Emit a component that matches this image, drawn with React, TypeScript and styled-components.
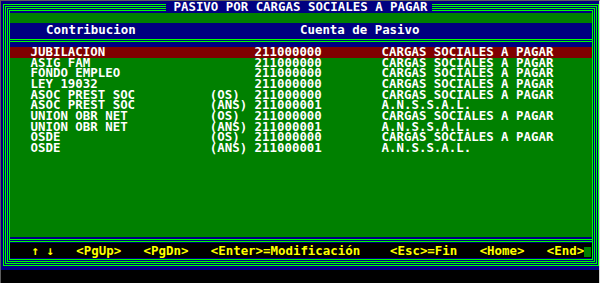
import React from "react";
import styled, { createGlobalStyle } from "styled-components";

const CHAR = 7.47;
const NAVY = "#000080";
const GREEN = "#008000";
const LINE = "#00ff00";
const RED = "#800000";

const GlobalStyle = createGlobalStyle`
  html, body {
    margin: 0;
    padding: 0;
    background: #000;
  }
  body {
    font-family: "DejaVu Sans Mono", "Liberation Mono", monospace;
    font-weight: bold;
    font-size: 12.41px;
  }
`;

const Window = styled.div`
  width: 600px;
  height: 283px;
  box-sizing: border-box;
  background: #000;
  border-left: 1px solid #5e5e5e;
  border-top: 1px solid #5e5e5e;
  border-right: 1px solid #d4d4d4;
  overflow: hidden;
`;

const Screen = styled.div`
  position: relative;
  height: 269px;
  box-sizing: border-box;
  background: ${NAVY};
  padding: 3px 0 0 2px;
`;

const OuterFrame = styled.div`
  border: 3px double ${LINE};
  padding: 1px;
`;

const Panel = styled.div`
  border: 3px double ${LINE};
  display: flex;
  flex-direction: column;
`;

const Title = styled.div`
  position: absolute;
  top: 0;
  left: 165px;
  width: 266px;
  height: 12px;
  line-height: 12px;
  background: ${NAVY};
  color: #fff;
  text-align: center;
  white-space: pre;
`;

const HeaderSection = styled.div`
  padding-top: 2px;
  border-bottom: 3px double ${LINE};
`;

const Band = styled.div`
  height: 10px;
  background: ${GREEN};
`;

const HeaderRow = styled.div`
  display: flex;
  height: 16px;
  line-height: 14px;
  color: #fff;
  padding-left: 36px;
`;

const Cell = styled.span<{ $cols?: number }>`
  display: inline-block;
  white-space: pre;
  flex: none;
  width: ${(p) => (p.$cols ? `${p.$cols * CHAR}px` : "auto")};
`;

const ListSection = styled.div`
  padding: 5px 0 2px;
  border-bottom: 3px double ${LINE};
`;

const List = styled.div`
  height: 190px;
  background: ${GREEN};
`;

const Row = styled.div<{ $active?: boolean }>`
  display: flex;
  height: 10.67px;
  line-height: 10.67px;
  padding-left: 20.5px;
  color: #fff;
  background: ${(p) => (p.$active ? RED : "transparent")};
`;

const FooterSection = styled.div`
  padding: 1px 0;
`;

const StatusBar = styled.div`
  display: flex;
  align-items: flex-start;
  height: 15px;
  line-height: 15px;
  padding-left: 21.5px;
  background: #000;
  color: #ffff00;
`;

const Cursor = styled.span`
  display: inline-block;
  width: 7px;
  height: 10px;
  margin-top: 4px;
  background: ${GREEN};
`;

const rows = [
  { name: "JUBILACION", tag: "", account: "211000000", desc: "CARGAS SOCIALES A PAGAR" },
  { name: "ASIG FAM", tag: "", account: "211000000", desc: "CARGAS SOCIALES A PAGAR" },
  { name: "FONDO EMPLEO", tag: "", account: "211000000", desc: "CARGAS SOCIALES A PAGAR" },
  { name: "LEY 19032", tag: "", account: "211000000", desc: "CARGAS SOCIALES A PAGAR" },
  { name: "ASOC PREST SOC", tag: "(OS)", account: "211000000", desc: "CARGAS SOCIALES A PAGAR" },
  { name: "ASOC PREST SOC", tag: "(ANS)", account: "211000001", desc: "A.N.S.S.A.L." },
  { name: "UNION OBR NET", tag: "(OS)", account: "211000000", desc: "CARGAS SOCIALES A PAGAR" },
  { name: "UNION OBR NET", tag: "(ANS)", account: "211000001", desc: "A.N.S.S.A.L." },
  { name: "OSDE", tag: "(OS)", account: "211000000", desc: "CARGAS SOCIALES A PAGAR" },
  { name: "OSDE", tag: "(ANS)", account: "211000001", desc: "A.N.S.S.A.L." },
];

const keys = [
  { label: "↑", cols: 2 },
  { label: "↓", cols: 4 },
  { label: "<PgUp>", cols: 9 },
  { label: "<PgDn>", cols: 9 },
  { label: "<Enter>=Modificación", cols: 24 },
  { label: "<Esc>=Fin", cols: 12 },
  { label: "<Home>", cols: 9 },
  { label: "<End>", cols: 5 },
];

export default function App() {
  return (
    <>
      <GlobalStyle />
      <Window>
        <Screen>
          <OuterFrame>
            <Panel>
              <HeaderSection>
                <Band />
                <HeaderRow>
                  <Cell $cols={34}>Contribucion</Cell>
                  <Cell>Cuenta de Pasivo</Cell>
                </HeaderRow>
              </HeaderSection>
              <ListSection>
                <List>
                  {rows.map((r, i) => (
                    <Row key={i} $active={i === 0}>
                      <Cell $cols={24}>{r.name}</Cell>
                      <Cell $cols={6}>{r.tag}</Cell>
                      <Cell $cols={17}>{r.account}</Cell>
                      <Cell>{r.desc}</Cell>
                    </Row>
                  ))}
                </List>
              </ListSection>
              <FooterSection>
                <StatusBar>
                  {keys.map((k) => (
                    <Cell key={k.label} $cols={k.cols}>
                      {k.label}
                    </Cell>
                  ))}
                  <Cursor />
                </StatusBar>
              </FooterSection>
            </Panel>
          </OuterFrame>
          <Title> PASIVO POR CARGAS SOCIALES A PAGAR </Title>
        </Screen>
      </Window>
    </>
  );
}
